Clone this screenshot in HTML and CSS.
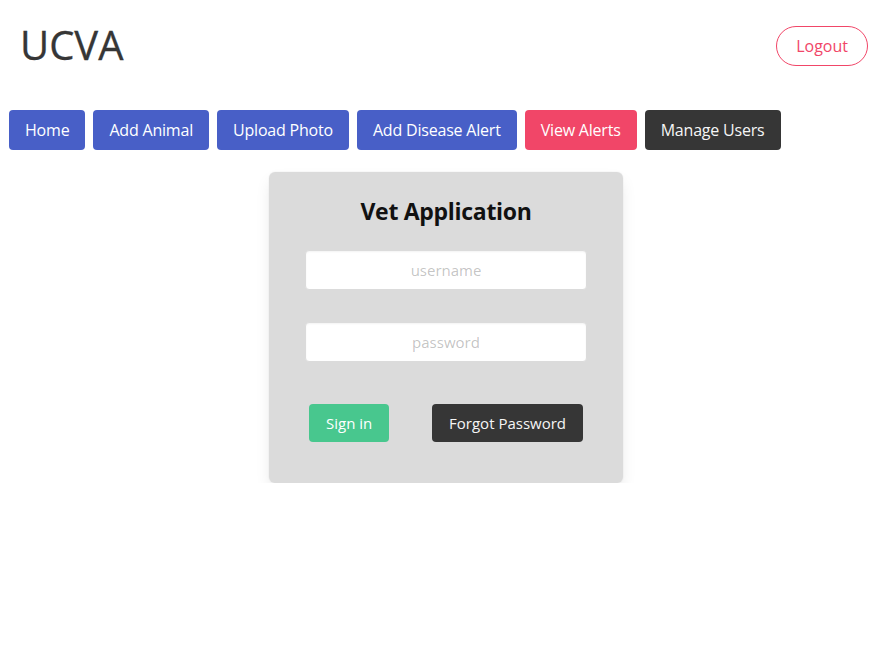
FILE: index.html
```html
<!DOCTYPE html>
<html lang="en">
<head>
<meta charset="utf-8">
<title>UCVA</title>
<link rel="stylesheet" href="styles.css">
</head>
<body>
<header class="top">
  <h1 class="brand">UCVA</h1>
  <button class="btn btn-logout">Logout</button>
</header>
<nav class="menu">
  <a class="btn btn-link" href="#">Home</a>
  <a class="btn btn-link" href="#">Add Animal</a>
  <a class="btn btn-link" href="#">Upload Photo</a>
  <a class="btn btn-link" href="#">Add Disease Alert</a>
  <a class="btn btn-danger" href="#">View Alerts</a>
  <a class="btn btn-dark" href="#">Manage Users</a>
</nav>
<main class="stage">
  <section class="card">
    <h2 class="card-title">Vet Application</h2>
    <form class="login">
      <input class="field" type="text" placeholder="username">
      <input class="field" type="password" placeholder="password">
      <div class="actions">
        <button class="btn btn-small btn-success" type="button">Sign in</button>
        <button class="btn btn-small btn-dark" type="button">Forgot Password</button>
      </div>
    </form>
  </section>
</main>
</body>
</html>
```
FILE: styles.css
```css
* { box-sizing: border-box; }
html, body {
  margin: 0;
  background: #fff;
  font-family: "Open Sans", "Noto Sans", sans-serif;
  font-size: 16px;
  line-height: 1.5;
  color: #4a4a4a;
}
.top {
  display: flex;
  justify-content: space-between;
  align-items: flex-start;
  padding: 22px 19px 0 20px;
}
.brand {
  margin: 0;
  font-size: 40px;
  font-weight: 400;
  line-height: 1.125;
  color: #363636;
  -webkit-text-stroke: 0.3px #363636;
}
.btn {
  display: inline-flex;
  align-items: center;
  justify-content: center;
  height: 40px;
  padding: 0 calc(1em - 1px);
  border: 1px solid transparent;
  border-radius: 4px;
  font-family: inherit;
  font-size: 16px;
  line-height: 1.5;
  letter-spacing: -0.2px;
  text-decoration: none;
  white-space: nowrap;
  cursor: pointer;
  color: #fff;
}
.btn-logout {
  margin-top: 4px;
  padding: 0 calc(1.25em - 1px);
  border-color: #f14668;
  border-radius: 9999px;
  background: #fff;
  color: #f14668;
  letter-spacing: 0;
}
.menu {
  display: flex;
  gap: 8px;
  margin-top: 43px;
  padding: 0 9px;
}
.btn-link { background: #485fc7; }
.btn-danger { background: #f14668; }
.btn-dark { background: #363636; color: #f5f5f5; }
.btn-success { background: #48c78e; }
.stage {
  display: flex;
  justify-content: center;
  padding: 22px 0 0 5px;
}
.card {
  width: 354px;
  padding: 27px 36px 41px;
  background: #dbdbdb;
  border-radius: 6px;
  box-shadow: 0 8px 16px -2px rgba(10,10,10,0.1), 0 0 0 1px rgba(10,10,10,0.02);
}
.card-title {
  margin: 0 0 25px;
  font-size: 23px;
  font-weight: 700;
  line-height: 1.125;
  letter-spacing: -0.3px;
  text-align: center;
  color: #111;
}
.login {
  display: flex;
  flex-direction: column;
}
.field {
  height: 40px;
  margin-bottom: 32px;
  padding: 0 10px;
  border: 1px solid #dbdbdb;
  border-radius: 4px;
  background: #fff;
  box-shadow: inset 0 1px 2px rgba(10,10,10,0.05);
  font-family: inherit;
  font-size: 15px;
  text-align: center;
  color: #363636;
}
.field + .field { margin-bottom: 42px; }
.field::placeholder { color: rgba(54,54,54,0.3); }
.actions {
  display: flex;
  justify-content: space-between;
  padding: 0 4px;
}
.btn-small {
  height: 38px;
  font-size: 15px;
  letter-spacing: 0;
  padding: 0 16px;
}
```
